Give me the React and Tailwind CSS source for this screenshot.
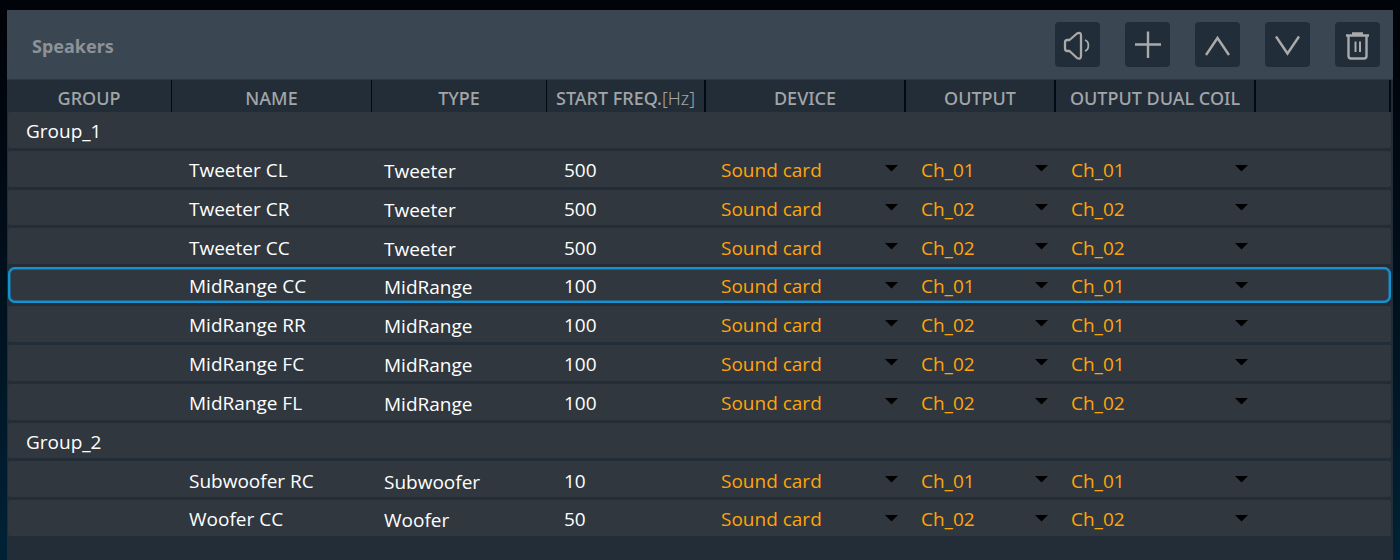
import React, { useState } from "react";

const COLUMNS =
  "grid grid-cols-[165px_200px_175px_159px_200px_150px_200px_minmax(0,1fr)]";

const DEVICES = ["Sound card"];
const CHANNELS = ["Ch_01", "Ch_02"];

const initialGroups = [
  {
    name: "Group_1",
    speakers: [
      { name: "Tweeter CL", type: "Tweeter", freq: 500, output: "Ch_01", dual: "Ch_01" },
      { name: "Tweeter CR", type: "Tweeter", freq: 500, output: "Ch_02", dual: "Ch_02" },
      { name: "Tweeter CC", type: "Tweeter", freq: 500, output: "Ch_02", dual: "Ch_02" },
      { name: "MidRange CC", type: "MidRange", freq: 100, output: "Ch_01", dual: "Ch_01" },
      { name: "MidRange RR", type: "MidRange", freq: 100, output: "Ch_02", dual: "Ch_01" },
      { name: "MidRange FC", type: "MidRange", freq: 100, output: "Ch_02", dual: "Ch_01" },
      { name: "MidRange FL", type: "MidRange", freq: 100, output: "Ch_02", dual: "Ch_02" },
    ],
  },
  {
    name: "Group_2",
    speakers: [
      { name: "Subwoofer RC", type: "Subwoofer", freq: 10, output: "Ch_01", dual: "Ch_01" },
      { name: "Woofer CC", type: "Woofer", freq: 50, output: "Ch_02", dual: "Ch_02" },
    ],
  },
];

const ToolButton = ({ label, children }) => (
  <button
    type="button"
    aria-label={label}
    className="flex size-[45px] items-center justify-center rounded-[4px] bg-[#212e39] text-[#aaaaaa] hover:bg-[#2b3946]"
  >
    <svg
      viewBox="0 0 45 45"
      className="size-[45px]"
      fill="none"
      stroke="currentColor"
      strokeWidth="2.4"
      aria-hidden="true"
    >
      {children}
    </svg>
  </button>
);

const HeaderCell = ({ children, wide }) => (
  <th
    scope="col"
    className={`flex items-center justify-center border-[#020b13] pt-1 font-medium whitespace-nowrap ${
      wide ? "border-r-2" : "border-r"
    }`}
  >
    {children}
  </th>
);

const Dropdown = ({ label, value, options }) => (
  <td className="relative flex items-center">
    <select
      aria-label={label}
      defaultValue={value}
      className="h-full w-full appearance-none bg-transparent pt-[3px] pl-[14px] text-[#ffa50a] outline-none"
    >
      {options.map((option) => (
        <option key={option} className="bg-[#30373f]">
          {option}
        </option>
      ))}
    </select>
    <svg
      viewBox="0 0 13 7"
      className="pointer-events-none absolute right-[9px] h-[7px] w-[13px]"
      aria-hidden="true"
    >
      <path d="M0 0h13L6.5 6.5z" fill="#000" />
    </svg>
  </td>
);

function SpeakerRow({ speaker, selected, onSelect }) {
  return (
    <tr
      onClick={onSelect}
      aria-selected={selected}
      className={`${COLUMNS} bg-[#30373f] ${
        selected
          ? "rounded-[7px] inset-ring-3 inset-ring-[#235f83] outline-[2px] -outline-offset-2 outline-[#1592d2]"
          : "rounded-[2px]"
      }`}
    >
      <td />
      <td className="flex items-center pt-[3px] pl-4">{speaker.name}</td>
      <td className="flex items-center pt-[5px] pl-[11px]">{speaker.type}</td>
      <td className="flex items-center pt-[3px] pl-4">{speaker.freq}</td>
      <Dropdown label={`Device of ${speaker.name}`} value="Sound card" options={DEVICES} />
      <Dropdown label={`Output of ${speaker.name}`} value={speaker.output} options={CHANNELS} />
      <Dropdown label={`Dual coil output of ${speaker.name}`} value={speaker.dual} options={CHANNELS} />
      <td />
    </tr>
  );
}

function App() {
  const [selected, setSelected] = useState("MidRange CC");

  return (
    <div className="flex min-h-screen flex-col bg-linear-to-b from-[#000307] to-[#002236] px-[7px] pt-[10px] font-['Open_Sans','Noto_Sans',sans-serif]">
      <main className="flex flex-1 flex-col bg-[#222d38]">
        <header className="flex items-center justify-between border-b border-[#2c3944] bg-[#3a4753] py-3 pr-[13px] pl-[25px]">
          <h1 className="pt-[2px] font-['Noto_Sans',sans-serif] text-lg font-bold text-[#8d9298]">
            Speakers
          </h1>
          <div className="flex gap-[25px]">
            <ToolButton label="Play test sound">
              <path
                d="M10 20.500q0-2.500 2.500-2.500h2l7.500-6.500q4-2 4 2v20.500q0 4-4 2l-7.500-7h-2q-2.500 0-2.500-2.500z"
                strokeLinejoin="round"
                strokeWidth="2.300"
              />
              <path d="M30 18c4.500 1.500 4.500 9.500 0 11" strokeWidth="1.800" />
            </ToolButton>
            <ToolButton label="Add speaker">
              <path d="M10 22.500h26M23 9.500v26.500" />
            </ToolButton>
            <ToolButton label="Move up">
              <path d="M11 33L22.500 16 34 33" />
            </ToolButton>
            <ToolButton label="Move down">
              <path d="M11 14.500L22.500 31.500 34 14.500" />
            </ToolButton>
            <ToolButton label="Delete speaker">
              <path d="M11 13.500h23M17 11.500h11" />
              <path d="M13.500 14v20q0 2.500 2.500 2.500h13q2.500 0 2.500-2.500v-20" />
              <path d="M20.500 19.500v10.500M25 19.500v10.500" strokeWidth="2" />
            </ToolButton>
          </div>
        </header>

        <table className="block text-[19px] text-white">
          <thead className="block font-['Noto_Sans',sans-serif] text-lg text-[#a3a5a7]">
            <tr className={`${COLUMNS} h-8 pr-[2px]`}>
              <HeaderCell>GROUP</HeaderCell>
              <HeaderCell>NAME</HeaderCell>
              <HeaderCell>TYPE</HeaderCell>
              <HeaderCell wide>
                START FREQ.<span className="font-light">[Hz]</span>
              </HeaderCell>
              <HeaderCell wide>DEVICE</HeaderCell>
              <HeaderCell wide>OUTPUT</HeaderCell>
              <HeaderCell wide>OUTPUT DUAL COIL</HeaderCell>
              <HeaderCell wide />
            </tr>
          </thead>
          <tbody className="grid min-h-[424px] auto-rows-fr gap-[3px] pr-[2px] pl-px">
            {initialGroups.map((group) => (
              <React.Fragment key={group.name}>
                <tr className="flex items-center rounded-[2px] bg-[#30373f]">
                  <th scope="rowgroup" className="pt-[3px] pl-[18px] font-normal">
                    {group.name}
                  </th>
                </tr>
                {group.speakers.map((speaker) => (
                  <SpeakerRow
                    key={speaker.name}
                    speaker={speaker}
                    selected={speaker.name === selected}
                    onSelect={() => setSelected(speaker.name)}
                  />
                ))}
              </React.Fragment>
            ))}
          </tbody>
        </table>
      </main>
    </div>
  );
}

export default App;
